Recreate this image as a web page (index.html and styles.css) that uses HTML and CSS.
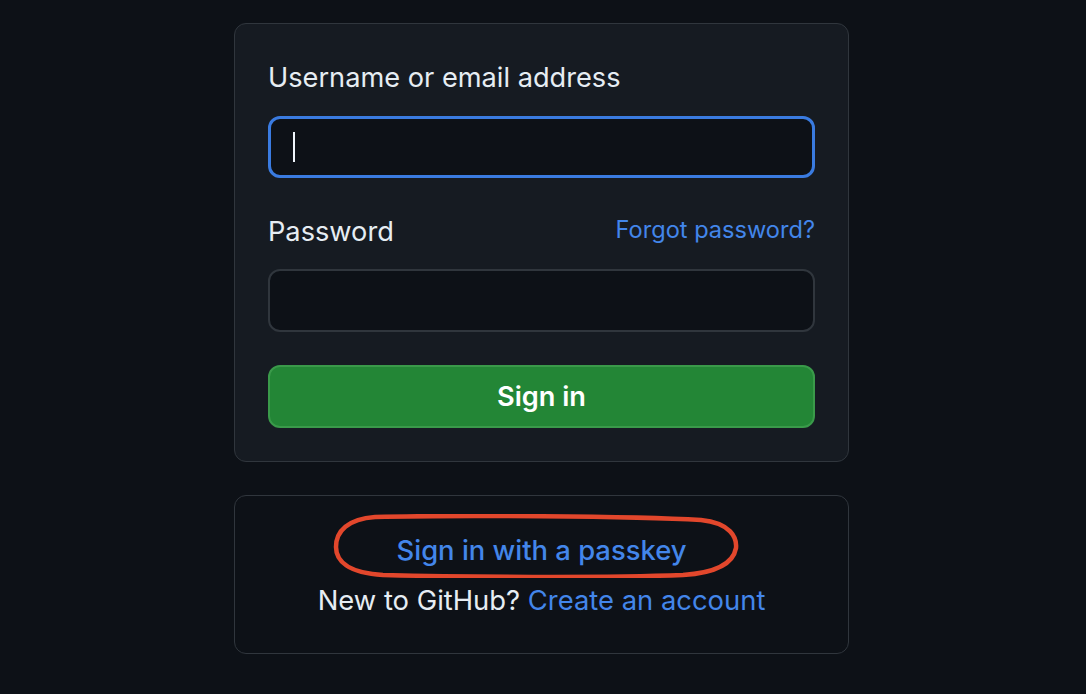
FILE: index.html
```html
<!DOCTYPE html>
<html lang="en">
<head>
<meta charset="utf-8">
<title>Sign in to GitHub</title>
<link rel="stylesheet" href="styles.css">
</head>
<body>
<main class="auth">
  <form class="card card-form">
    <label class="label" for="login">Username or email address</label>
    <div class="input input-focus" id="login"><span class="caret"></span></div>
    <div class="label-row">
      <label class="label" for="password">Password</label>
      <a class="link small" href="#">Forgot password?</a>
    </div>
    <div class="input" id="password"></div>
    <button class="btn-primary" type="button">Sign in</button>
  </form>
  <div class="card card-alt">
    <div class="passkey">
      <a class="link passkey-link" href="#">Sign in with a passkey</a>
      <svg class="scribble" viewBox="0 0 406 64" width="406" height="64" aria-hidden="true">
        <path d="M42 3 C120 1 300 2 368 6 C398 9 404 24 403 34 C400 51 380 59 350 61 C270 64 130 63 50 61 C15 59 3 47 3 33 C3 17 15 5 42 3 Z" fill="none" stroke="#e2472c" stroke-width="4.5"/>
      </svg>
    </div>
    <p class="signup">New to GitHub? <a class="link" href="#">Create an account</a></p>
  </div>
</main>
</body>
</html>
```

FILE: styles.css
```css
html, body {
  margin: 0;
  padding: 0;
  background: #0d1117;
}
body {
  font-family: Inter, "Noto Sans", "Liberation Sans", sans-serif;
  color: #e6edf3;
}
.auth {
  width: 615px;
  margin-left: 234px;
  padding-top: 23px;
  display: flex;
  flex-direction: column;
  gap: 33px;
}
.card {
  box-sizing: border-box;
  border: 1px solid #30363d;
  border-radius: 12px;
}
.card-form {
  background: #161b22;
  padding: 33px 33px 33px;
  display: flex;
  flex-direction: column;
  margin: 0;
}
.label {
  display: block;
  font-size: 27.2px;
  line-height: 42px;
  font-weight: 400;
  color: #e6edf3;
}
.card-form > .label {
  margin-bottom: 17px;
}
.label-row {
  display: flex;
  justify-content: space-between;
  align-items: center;
  margin-top: 33px;
  margin-bottom: 16px;
}
.input {
  box-sizing: border-box;
  height: 63px;
  border: 2px solid #30363d;
  border-radius: 12px;
  background: #0d1117;
  display: flex;
  align-items: center;
  padding-left: 23px;
}
.input-focus {
  height: 62px;
  border: 3px solid #3a7be0;
  padding-left: 22px;
}
.caret {
  width: 2px;
  height: 30px;
  background: #f0f6fc;
}
.link {
  color: #4386ea;
  text-decoration: none;
}
.small {
  font-size: 23.6px;
  line-height: 34px;
  margin-top: -4px;
}
.btn-primary {
  margin-top: 33px;
  height: 63px;
  border: 2px solid #3a9a4a;
  border-radius: 12px;
  background: #238636;
  color: #ffffff;
  font-family: inherit;
  font-size: 27.2px;
  font-weight: 600;
}
.card-alt {
  background: #0d1117;
  padding: 32px 16px 30px;
  text-align: center;
  height: 159px;
}
.passkey {
  position: relative;
  height: 44px;
  display: flex;
  justify-content: center;
  align-items: center;
}
.passkey-link {
  font-size: 27.4px;
  line-height: 44px;
  font-weight: 500;
}
.scribble {
  position: absolute;
  left: 82px;
  top: -14px;
}
.signup {
  margin: 8px 0 0;
  font-size: 27.4px;
  line-height: 40px;
  color: #e6edf3;
}
```
